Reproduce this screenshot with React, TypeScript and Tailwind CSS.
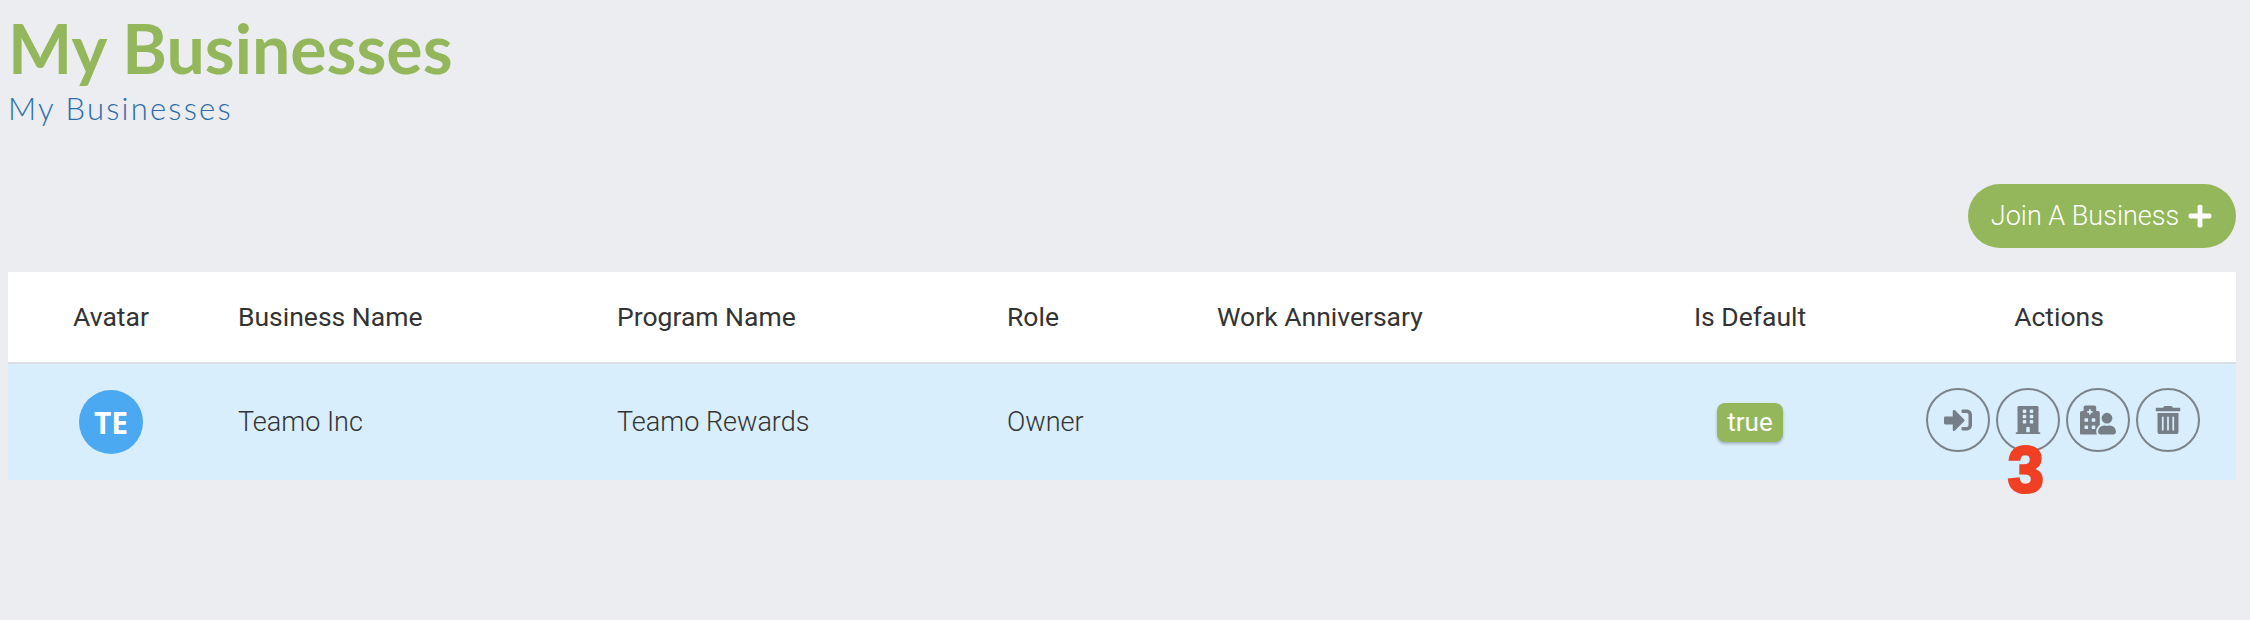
import { FaBuilding, FaHospitalUser, FaPlus, FaSignInAlt, FaTrashAlt } from 'react-icons/fa'

const columns = 'grid grid-cols-[206px_379px_390px_210px_417px_280px_346px] items-center'

const actions = [
  { name: 'Enter', icon: <FaSignInAlt className="text-[28px]" /> },
  { name: 'Business', icon: <FaBuilding className="text-[28px]" /> },
  { name: 'Users', icon: <FaHospitalUser className="text-[36px]" /> },
  { name: 'Delete', icon: <FaTrashAlt className="text-[28px]" /> },
]

export default function App() {
  return (
    <div className="h-[620px] w-[2250px] overflow-hidden bg-[#ebedf1] pl-2 pr-[14px] font-['Roboto',sans-serif]">
      <div className="h-[184px] pt-[10px]">
        <h1 className="font-['Lato',sans-serif] text-[68px] leading-[76px] font-bold text-[#93b75a]">My Businesses</h1>
        <p className="mt-[4px] font-['Lato',sans-serif] text-[31px] leading-[36px] font-light tracking-[2.2px] text-[#2b6cab]">My Businesses</p>
      </div>

      <div className="flex justify-end">
        <button className="flex h-16 w-[268px] items-center justify-center gap-2 rounded-full bg-[#93b75a] text-[27px] font-light text-white">
          Join A Business
          <FaPlus className="text-[26px]" />
        </button>
      </div>

      <div className="mt-6">
        <div className={`${columns} h-[92px] border-b-2 border-[#d9dde2] bg-white text-[26.5px] text-[#333]`}>
          <div className="text-center">Avatar</div>
          <div className="pl-6">Business Name</div>
          <div className="pl-6">Program Name</div>
          <div className="pl-6">Role</div>
          <div className="pl-6">Work Anniversary</div>
          <div className="text-center">Is Default</div>
          <div className="pr-2 text-center">Actions</div>
        </div>
        <div className={`${columns} h-[116px] bg-[#d8eefd] text-[27px] font-light text-[#333]`}>
          <div className="flex justify-center">
            <div className="flex size-16 items-center justify-center rounded-full bg-[#4aa9f0] font-['Open_Sans',sans-serif] text-[30px] font-bold text-white">TE</div>
          </div>
          <div className="pl-6">Teamo Inc</div>
          <div className="pl-6">Teamo Rewards</div>
          <div className="pl-6">Owner</div>
          <div />
          <div className="flex justify-center">
            <span className="rounded-lg bg-[#93b75a] px-2.5 text-[26px] leading-[39px] font-normal text-white shadow-[0_2px_3px_rgba(0,0,0,0.25)]">true</span>
          </div>
          <div className="relative -mt-1 flex justify-center gap-1.5">
            {actions.map((action) => (
              <button key={action.name} aria-label={action.name} className="flex size-16 items-center justify-center rounded-full border-2 border-[#7b8289] text-[#767e87]">
                {action.icon}
              </button>
            ))}
            <span className="absolute left-[118px] top-[47px] font-['Liberation_Sans',sans-serif] text-[64px] leading-[70px] font-bold text-[#f04023] [-webkit-text-stroke:3px_#f04023]">3</span>
          </div>
        </div>
      </div>
    </div>
  )
}
